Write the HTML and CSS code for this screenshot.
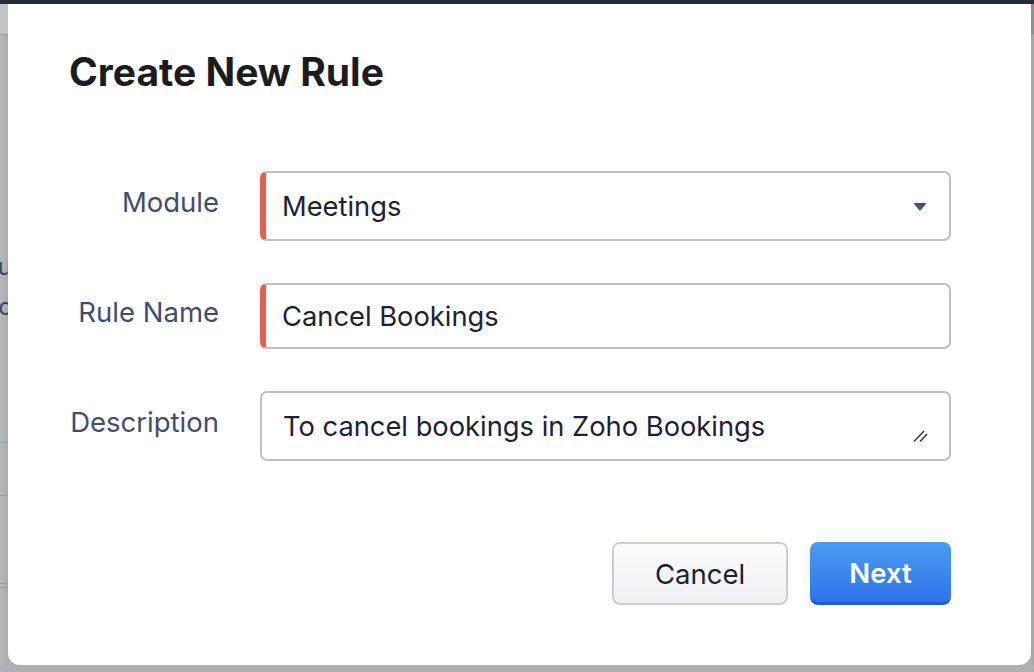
FILE: index.html
```html
<!DOCTYPE html>
<html lang="en">
<head>
  <meta charset="UTF-8" />
  <meta name="viewport" content="width=device-width, initial-scale=1.0" />
  <title>Create New Rule</title>
  <link rel="stylesheet" href="styles.css">
</head>
<body>
  <div class="topbar"></div>

  <div class="stage">
    <div class="behind behind-left">
      <div class="behind-head"></div>
      <span class="peek peek-u">u</span>
      <span class="peek peek-c">c</span>
      <div class="behind-line line-1"></div>
      <div class="behind-line line-2"></div>
      <div class="behind-line line-3"></div>
    </div>

    <div class="modal">
      <h1>Create New Rule</h1>

      <div class="fields">
        <div class="row">
          <label>Module</label>
          <div class="field required select">
            <span>Meetings</span>
            <svg class="caret" width="14" height="9" viewBox="0 0 14 9">
              <path d="M1.5 1 H12.5 Q13.6 1 12.9 1.9 L7.8 8 Q7 8.9 6.2 8 L1.1 1.9 Q0.4 1 1.5 1 Z" fill="#3b5470"/>
            </svg>
          </div>
        </div>

        <div class="row">
          <label>Rule Name</label>
          <div class="field required short">
            <span>Cancel Bookings</span>
          </div>
        </div>

        <div class="row">
          <label>Description</label>
          <div class="field textarea">
            <span>To cancel bookings in Zoho Bookings</span>
            <svg class="grip" width="15" height="14" viewBox="0 0 15 14">
              <line x1="1" y1="13.5" x2="11" y2="3" stroke="#2b2f36" stroke-width="1.3"/>
              <line x1="7" y1="13.5" x2="14" y2="6" stroke="#2b2f36" stroke-width="1.3"/>
            </svg>
          </div>
        </div>
      </div>

      <div class="actions">
        <button class="btn btn-cancel">Cancel</button>
        <button class="btn btn-next">Next</button>
      </div>
    </div>

    <div class="behind behind-right">
      <div class="behind-head"></div>
    </div>
  </div>
</body>
</html>
```

FILE: styles.css
```css
* {
  box-sizing: border-box;
}

body {
  margin: 0;
  padding: 0;
  width: 1034px;
  height: 672px;
  overflow: hidden;
  font-family: 'Inter', 'Noto Sans', sans-serif;
  background: #aeb0b5;
  display: flex;
  flex-direction: column;
}

.topbar {
  height: 4px;
  background: #262b3a;
  flex-shrink: 0;
}

.stage {
  display: flex;
  height: 661px;
}

.behind {
  position: relative;
  overflow: hidden;
  background: linear-gradient(to right, #b6b8bc, #a9abb0);
}

.behind-left {
  width: 8px;
}

.behind-right {
  width: 3px;
  background: #a7a9ae;
}

.behind-head {
  height: 31px;
  background: #c2c4c8;
  border-bottom: 1px solid #9a9ca2;
}

.behind-right .behind-head {
  background: #8e9097;
}

.peek {
  position: absolute;
  right: -4px;
  font-size: 24px;
  color: #3a4666;
}

.peek-u {
  top: 248px;
}

.peek-c {
  top: 288px;
}

.behind-line {
  position: absolute;
  left: 0;
  right: 0;
  height: 1px;
  background: #8f98a6;
}

.line-1 { top: 438px; }
.line-2 { top: 491px; }
.line-3 { top: 579px; height: 5px; border-top: 1px solid #8f98a6; border-bottom: 1px solid #8f98a6; background: transparent; }

.modal {
  width: 1023px;
  height: 661px;
  background: #fff;
  border-radius: 0 0 12px 12px;
  padding: 0 80px 0 61px;
}

h1 {
  margin: 0;
  padding-top: 46px;
  font-size: 39px;
  line-height: 44px;
  font-weight: 700;
  color: #1b1c20;
}

.fields {
  margin-top: 77px;
  display: flex;
  flex-direction: column;
  gap: 42px;
}

.row {
  display: flex;
  align-items: center;
  gap: 41px;
}

.row label {
  width: 150px;
  text-align: right;
  font-size: 27.5px;
  color: #3f4d6f;
  flex-shrink: 0;
  position: relative;
  top: -4px;
}

.field {
  flex: 1;
  height: 70px;
  border: 2px solid #bcc0c8;
  border-radius: 7px;
  display: flex;
  align-items: center;
  justify-content: space-between;
  padding: 0 22px 0 21px;
  font-size: 27.3px;
  color: #1c2233;
  position: relative;
}

.field.short {
  height: 66px;
}

.field.required {
  border-left: 6px solid #ea5e4f;
  padding-left: 16px;
}

.textarea .grip {
  position: absolute;
  right: 21px;
  bottom: 17px;
}

.actions {
  display: flex;
  justify-content: flex-end;
  gap: 22px;
  margin-top: 81px;
}

.btn {
  height: 63px;
  font-family: 'Inter', 'Noto Sans', sans-serif;
  font-size: 27.5px;
  border-radius: 8px;
  cursor: pointer;
}

.btn-cancel {
  width: 176px;
  color: #1c2233;
  background: linear-gradient(#fbfcfd, #eef0f4);
  border: 2px solid #cbced5;
}

.btn-next {
  width: 141px;
  padding-top: 3px;
  color: #fff;
  font-weight: 600;
  background: linear-gradient(#4a9bf0, #2f73ec);
  border: none;
  border-bottom: 3px solid #1f5ccc;
}
```
